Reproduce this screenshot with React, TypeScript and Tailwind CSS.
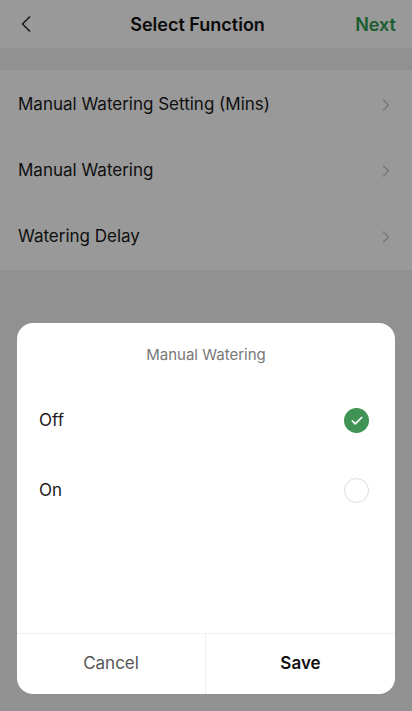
import { Check, ChevronLeft, ChevronRight } from 'lucide-react'

const FUNCTIONS = ['Manual Watering Setting (Mins)', 'Manual Watering', 'Watering Delay']
const OPTIONS = [
  { label: 'Off', selected: true },
  { label: 'On', selected: false },
]

export default function App() {
  return (
    <div className="relative h-[711px] w-[412px] overflow-hidden bg-[#f2f2f2] font-['Inter',sans-serif] text-[#1a1a1a]">
      {/* page */}
      <div className="flex h-[48px] items-center justify-between bg-white px-3">
        <ChevronLeft className="h-7 w-7 text-[#333]" strokeWidth={1.5} />
        <h1 className="text-[18px] font-semibold text-[#111]">Select Function</h1>
        <span className="pr-1 text-[18px] font-semibold text-[#2f9a4e]">Next</span>
      </div>
      <div className="mt-[22px] bg-white pt-[2px]">
        {FUNCTIONS.map(f => (
          <div key={f} className="flex h-[66px] items-center justify-between pl-[18px] pr-4">
            <span className="text-[17px]">{f}</span>
            <ChevronRight className="h-5 w-5 text-[#c4c4c4]" strokeWidth={1.5} />
          </div>
        ))}
      </div>

      {/* dim layer */}
      <div className="absolute inset-0 bg-black/40" />

      {/* picker dialog */}
      <div className="absolute left-[17px] top-[323px] flex h-[371px] w-[378px] flex-col overflow-hidden rounded-2xl bg-white">
        <div className="pt-[21px] text-center text-[15px] text-[#777]">Manual Watering</div>
        <div className="mt-[19px] flex-1">
          {OPTIONS.map(o => (
            <div key={o.label} className="flex h-[70px] items-center justify-between pl-[22px] pr-[26px]">
              <span className="text-[17px]">{o.label}</span>
              {o.selected ? (
                <div className="flex h-[25px] w-[25px] items-center justify-center rounded-full bg-[#3f9455]">
                  <Check className="h-3.5 w-3.5 text-white" strokeWidth={3} />
                </div>
              ) : (
                <div className="h-[25px] w-[25px] rounded-full border border-[#dcdcdc]" />
              )}
            </div>
          ))}
        </div>
        <div className="grid h-[61px] grid-cols-2 border-t border-[#efefef]">
          <button className="border-r border-[#efefef] text-[17px] text-[#555]">Cancel</button>
          <button className="text-[17px] font-semibold text-[#111]">Save</button>
        </div>
      </div>
    </div>
  )
}
